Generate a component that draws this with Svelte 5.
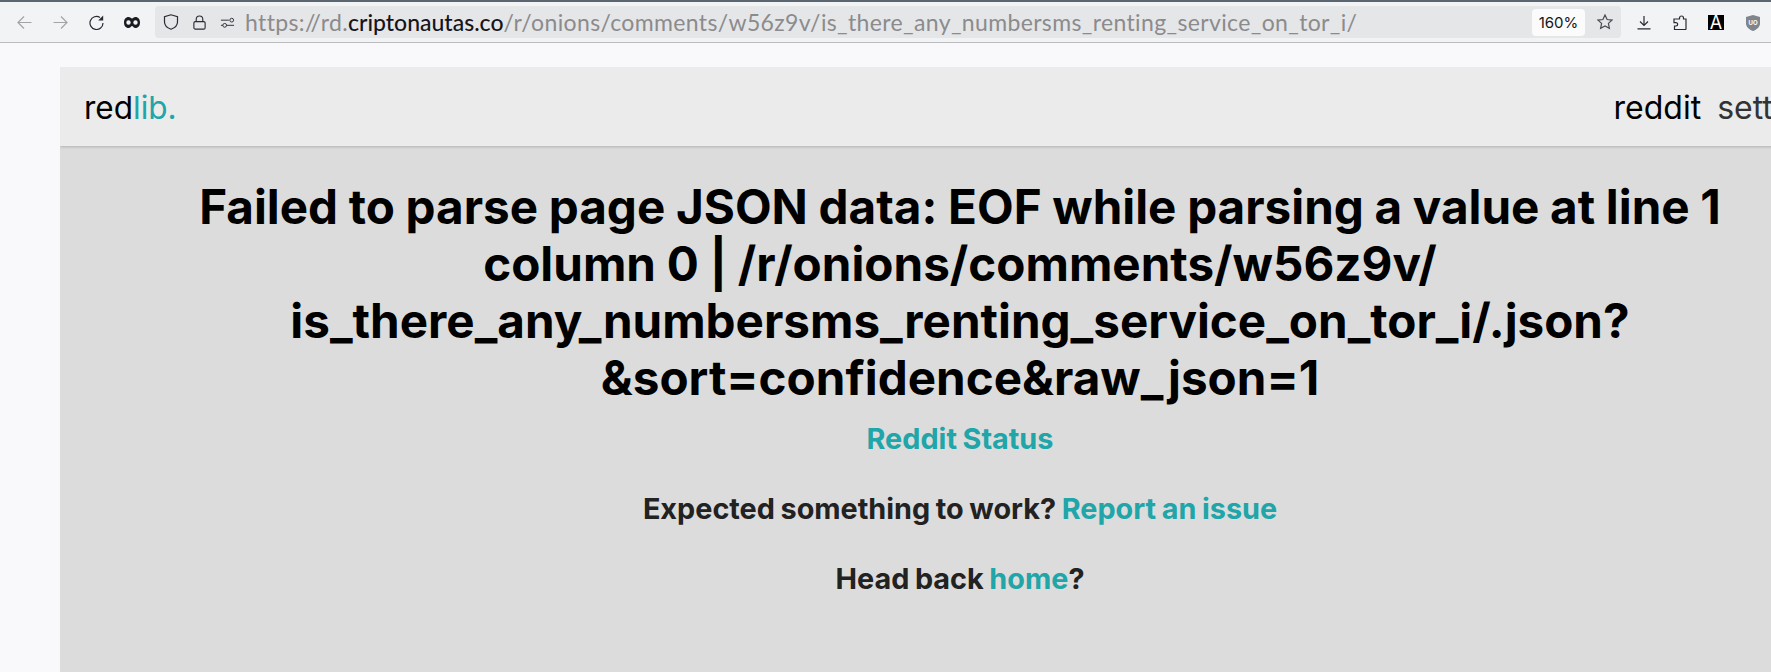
<script>
  const links = ["reddit", "settings"];
</script>

<div class="window">
  <header class="toolbar">
    <div class="nav-buttons">
      <svg class="tb dim" viewBox="0 0 15 15"><path d="M14.500 7.500H1M7 1.500l-6 6 6 6"/></svg>
      <svg class="tb dim" viewBox="0 0 15 15"><path d="M.5 7.500H14M8 1.500l6 6-6 6"/></svg>
      <svg class="tb" viewBox="0 0 15 15"><path d="M14 8a6.500 6.500 0 1 1-3-5.500"/><path class="solid" d="M14.200.5v5h-5Z"/></svg>
      <svg class="mask" viewBox="0 0 16 11"><path fill-rule="evenodd" d="M4.500 0C6.500 0 7 1.500 8 1.500S9.500 0 11.500 0C14.200 0 16 2.300 16 5.500S14.200 11 11.500 11C9.500 11 9 9 8 9s-1.500 2-3.500 2C1.800 11 0 8.700 0 5.500S1.800 0 4.500 0ZM4.500 3.300a2.200 2.200 0 1 0 0 4.400 2.200 2.200 0 0 0 0-4.400ZM11.500 3.300a2.200 2.200 0 1 0 0 4.400 2.200 2.200 0 0 0 0-4.400Z"/></svg>
    </div>
    <div class="urlbar">
      <svg class="tb shield" viewBox="0 0 16 16"><path d="M8 .8 1.500 2.800v5.200c0 3.500 2.600 5.800 6.500 7.200 3.900-1.400 6.500-3.700 6.500-7.200V2.800Z"/></svg>
      <svg class="tb lock" viewBox="0 0 16 16"><rect x="2" y="7" width="12" height="8" rx="1.500"/><path d="M4.500 7V4.500a3.500 3.500 0 0 1 7 0V7"/></svg>
      <svg class="tb perms" viewBox="0 0 16 16"><path d="M1 5.500h8.500M1 11h2M7 11h8"/><circle cx="12.500" cy="5.500" r="2"/><circle cx="5" cy="11" r="2"/></svg>
      <div class="url"><span>https://rd.</span><b>criptonautas.co</b><span>/r/onions/comments/w56z9v/is_there_any_numbersms_renting_service_on_tor_i/</span></div>
      <div class="zoom">160%</div>
      <svg class="tb star" viewBox="0 0 16 16"><path d="m8 1 2.100 4.500 4.900.6-3.600 3.300 1 4.900L8 11.900l-4.400 2.400 1-4.900L1 6.100l4.900-.6Z"/></svg>
    </div>
    <div class="actions">
      <svg class="tb act" viewBox="0 0 14 15"><path d="M7 1v9.500M3 6.500l4 4 4-4M.5 13.800h13"/></svg>
      <svg class="tb act" viewBox="0 0 14 15"><path d="M5 4h1.500V3a2 2 0 0 1 4 0v1H13v9.800a.8.8 0 0 1-.8.800H1.500V11H3a1.700 1.700 0 0 0 0-3.400H1V4Z"/></svg>
      <div class="font-ext">A</div>
      <svg class="ublock" viewBox="0 0 14 16"><path d="M7 0 14 2v6.500c0 3.200-3 6-7 7.500-4-1.500-7-4.300-7-7.500V2Z"/><text x="7" y="9.500">UO</text></svg>
    </div>
  </header>

  <div class="page">
    <div class="site">
      <nav class="topnav">
        <div class="logo">red<span>lib.</span></div>
        <div class="links">
          {#each links as l, i}<span class:second={i === 1}>{l}</span>{/each}
        </div>
      </nav>
      <main class="error">
        <h1>Failed to parse page JSON data: EOF while parsing a value at line 1 column 0 | /r/onions/comments/w56z9v/<wbr>is_there_any_numbersms_renting_service_on_tor_i/.json?<wbr>&amp;sort=confidence&amp;raw_json=1</h1>
        <h3><a href="#s">Reddit Status</a></h3>
        <h3>Expected something to work? <a href="#i">Report an issue</a></h3>
        <h3>Head back <a href="#h">home</a>?</h3>
      </main>
    </div>
  </div>
</div>

<style>
  :global(body) { margin: 0; overflow: hidden; background: #f9f9fb; }
  .window { width: 1771px; height: 672px; overflow: hidden; display: flex; flex-direction: column; font-family: Inter, "Liberation Sans", sans-serif; }
  .toolbar { height: 40px; flex: none; display: flex; align-items: center; background: #f2f3f5; border-top: 2px solid #5c6670; border-bottom: 1px solid #bcbcbe; }
  .tb { width: 15px; height: 15px; flex: none; fill: none; stroke: #2b2a33; stroke-width: 1.200; }
  .dim { stroke: #a3a3a8; }
  .solid { fill: #2b2a33; stroke: none; }
  .mask { width: 16px; height: 11px; flex: none; fill: #1c1b22; margin-left: -1px; }
  .nav-buttons { display: flex; align-items: center; gap: 21px; width: 155px; height: 17px; padding: 1px 0 0 17px; box-sizing: border-box; flex: none; }
  .urlbar { width: 1466px; height: 32px; flex: none; border-radius: 4px; background: #e5e6e8; display: flex; align-items: center; box-sizing: border-box; padding-left: 8px; gap: 13px; }
  .shield { width: 16px; height: 16px; }
  .perms { stroke-width: 1; }
  .url { flex: 1; font-family: Lato, sans-serif; font-size: 23px; color: #8b8b8d; white-space: nowrap; margin-left: -3px; }
  .url span { letter-spacing: .36px; }
  .url b { font-weight: 500; color: #15141a; letter-spacing: 0; }
  .zoom { width: 53px; height: 27px; border-radius: 4px; background: #fbfbfc; font-size: 15px; line-height: 27px; text-align: center; color: #15141a; margin-right: -1px; }
  .star { width: 16px; height: 16px; stroke: #4a4a50; margin-right: 8px; }
  .actions { display: flex; align-items: center; gap: 21.500px; padding: 1px 0 0 16px; }
  .act { width: 14px; }
  .font-ext { width: 16px; height: 15px; background: #000; color: #fff; font-size: 18px; line-height: 16px; text-align: center; font-weight: 400; }
  .ublock { width: 14px; height: 16px; fill: #80858b; }
  .ublock text { font-size: 6px; fill: #fff; text-anchor: middle; font-weight: 700; }
  .page { flex: 1; padding: 24px 0 0 60px; }
  .site { width: 1800px; height: 700px; background: #dcdcdc; overflow: hidden; }
  .topnav { height: 79px; display: flex; justify-content: space-between; align-items: center; box-sizing: border-box; padding: 2px 24px 0; background: #ebebeb; box-shadow: 0 1px 3px rgba(0,0,0,.2); font-size: 32px; }
  .logo { color: #000; font-size: 31.500px; }
  .logo span { color: #20a5a8; }
  .links { display: flex; gap: 16px; }
  .links span { color: #000; }
  .links .second { color: #333; }
  .error { text-align: center; color: #222; }
  h1 { width: 1560px; margin: 32px auto 0; font-size: 47.600px; word-spacing: -.6px; font-weight: 700; line-height: 57px; color: #000; }
  h3 { font-size: 28.800px; word-spacing: -1.200px; line-height: 34px; font-weight: 700; margin: 0 0 36px; }
  h1 + h3 { margin-top: 16px; }
  a { color: #20a5a8; text-decoration: none; }
</style>
